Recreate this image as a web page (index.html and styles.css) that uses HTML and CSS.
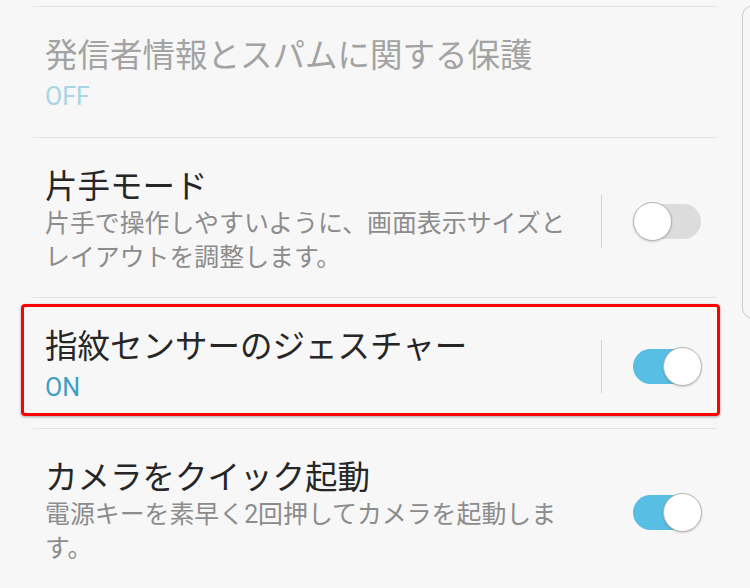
FILE: index.html
```html
<!DOCTYPE html>
<html lang="ja">
<head>
<meta charset="utf-8">
<title>設定</title>
<link rel="stylesheet" href="styles.css">
</head>
<body>
<div class="screen">
  <div class="edge-panel"></div>
  <div class="list">
    <div class="row row-short">
      <div class="text">
        <div class="title disabled">発信者情報とスパムに関する保護</div>
        <div class="status off">OFF</div>
      </div>
    </div>
    <div class="row">
      <div class="text">
        <div class="title">片手モード</div>
        <div class="sub">片手で操作しやすいように、画面表示サイズとレイアウトを調整します。</div>
      </div>
      <div class="sep"></div>
      <div class="toggle"><div class="thumb"></div></div>
    </div>
    <div class="row row-short highlighted">
      <div class="mark"></div>
      <div class="text">
        <div class="title">指紋センサーのジェスチャー</div>
        <div class="status on">ON</div>
      </div>
      <div class="sep"></div>
      <div class="toggle checked"><div class="thumb"></div></div>
    </div>
    <div class="row">
      <div class="text">
        <div class="title">カメラをクイック起動</div>
        <div class="sub">電源キーを素早く2回押してカメラを起動します。</div>
      </div>
      <div class="toggle checked"><div class="thumb"></div></div>
    </div>
  </div>
</div>
</body>
</html>
```

FILE: styles.css
```css
* { box-sizing: border-box; }
html, body {
  margin: 0;
  padding: 0;
  background: #f7f7f7;
}
body {
  font-family: Roboto, "Noto Sans CJK JP", sans-serif;
}
.screen {
  position: relative;
  width: 750px;
  height: 588px;
  overflow: hidden;
}
.edge-panel {
  position: absolute;
  left: 742px;
  top: 5px;
  width: 30px;
  height: 314px;
  border: 1.5px solid #cbcbcb;
  border-radius: 11px;
}
.list {
  margin-left: 33px;
  width: 684px;
  padding-top: 6px;
}
.row {
  position: relative;
  display: flex;
  align-items: center;
  border-top: 1px solid #e3e3e3;
  padding: 29px 16px 22px 12px;
}
.row-short {
  padding-bottom: 23px;
}
.text {
  width: 530px;
  flex: none;
}
.title {
  font-size: 32.5px;
  line-height: 40px;
  color: #262626;
}
.title.disabled {
  color: #a3a3a3;
}
.sub {
  font-size: 24.9px;
  line-height: 34px;
  color: #8c8c8c;
}
.status {
  font-size: 25px;
  line-height: 34px;
  padding-top: 4px;
}
.status.off { color: #a9d4e6; }
.status.on { color: #3f9ec3; }
.sep {
  width: 1px;
  height: 53px;
  background: #d2d2d2;
  margin-left: 26px;
  flex: none;
}
.toggle {
  position: relative;
  width: 68px;
  height: 35px;
  border-radius: 18px;
  background: #dcdcdc;
  margin-left: auto;
  flex: none;
}
.toggle.checked {
  background: #58bee4;
}
.thumb {
  position: absolute;
  top: -2px;
  left: 0;
  width: 39px;
  height: 39px;
  border-radius: 50%;
  background: #fff;
  border: 1px solid #b4b4b4;
  box-shadow: 0 1px 2px rgba(0,0,0,0.18);
}
.toggle.checked .thumb {
  left: 30px;
}
.mark {
  position: absolute;
  left: -12px;
  top: 6px;
  width: 699px;
  height: 112px;
  border: 3.5px solid #ff0000;
  border-radius: 4px;
  box-shadow: 0 1px 3px rgba(0,0,0,0.35);
}
```
